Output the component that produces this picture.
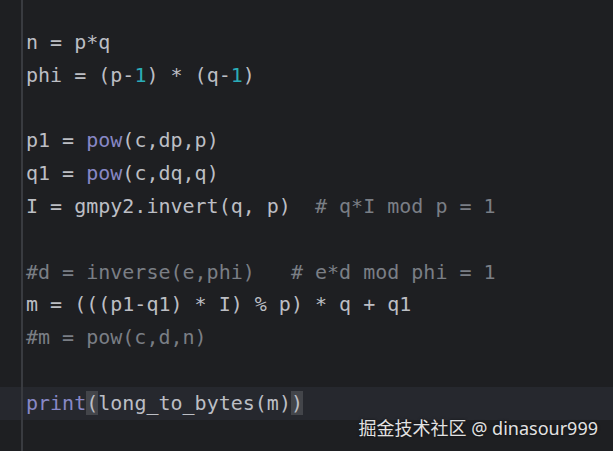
import React from "react";

const T = ({ c, children }: { c: string; children: React.ReactNode }) => (
  <span className={c}>{children}</span>
);

const def = "text-[#bcbec4]";
const num = "text-[#2aacb8]";
const fn = "text-[#8888c6]";
const cm = "text-[#7a7e85]";

const lines: React.ReactNode[] = [
  <>n = p*q</>,
  <>
    phi = (p-<T c={num}>1</T>) * (q-<T c={num}>1</T>)
  </>,
  null,
  <>
    p1 = <T c={fn}>pow</T>(c,dp,p)
  </>,
  <>
    q1 = <T c={fn}>pow</T>(c,dq,q)
  </>,
  <>
    I = gmpy2.invert(q, p)  <T c={cm}># q*I mod p = 1</T>
  </>,
  null,
  <T c={cm}>#d = inverse(e,phi)   # e*d mod phi = 1</T>,
  <>m = (((p1-q1) * I) % p) * q + q1</>,
  <T c={cm}>#m = pow(c,d,n)</T>,
  null,
  <>
    <T c={fn}>print</T>
    <span className="bg-[#43454a]">(</span>long_to_bytes(m)
    <span className="bg-[#43454a]">)</span>
  </>,
];

export default function App() {
  return (
    <div className="relative w-[613px] h-[451px] overflow-hidden bg-[#1e1f22]">
      <div className="absolute left-[21px] top-0 h-full w-[2px] bg-[#393b40]" />
      <div
        className="pt-[26px] whitespace-pre text-[20px]"
        style={{ fontFamily: "'DejaVu Sans Mono', monospace" }}
      >
        {lines.map((l, i) => (
          <div
            key={i}
            className={`h-[32.8px] leading-[32.8px] pl-[26px] ${def} ${
              i === lines.length - 1 ? "bg-[#26282e]" : ""
            }`}
          >
            {l ?? " "}
          </div>
        ))}
      </div>
      <div
        className="absolute right-[15px] bottom-[10px] text-[18px] leading-[26px] text-[#e2e2e2] [text-shadow:0_0_3px_rgba(0,0,0,0.6)]"
        style={{ fontFamily: "'Noto Sans', 'Noto Sans CJK SC', sans-serif" }}
      >
        掘金技术社区 @ dinasour999
      </div>
    </div>
  );
}
